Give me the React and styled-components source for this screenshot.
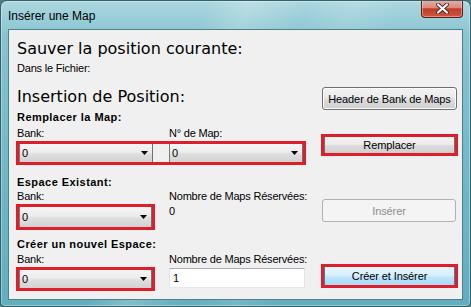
import { createGlobalStyle, styled } from "styled-components";

const GlobalStyle = createGlobalStyle`
  html, body {
    margin: 0;
    padding: 0;
    background: #4f7d83;
  }
  body {
    font-family: "Liberation Sans", Arial, sans-serif;
    color: #000;
  }
`;

const Window = styled.div`
  width: 471px;
  height: 307px;
  box-sizing: border-box;
  display: flex;
  flex-direction: column;
  border: 1px solid #33606a;
  border-radius: 7px 7px 5px 5px;
  padding: 0 7px 6px 7px;
  overflow: hidden;
  box-shadow: inset 0 0 0 1px rgba(255, 255, 255, 0.35);
  background: linear-gradient(
      112deg,
      rgba(255, 255, 255, 0) 35%,
      rgba(255, 255, 255, 0.2) 42%,
      rgba(255, 255, 255, 0) 52%,
      rgba(255, 255, 255, 0.12) 60%,
      rgba(255, 255, 255, 0) 68%
    ),
    linear-gradient(180deg, #acd7df 0%, #86c4d0 12%, #74b9c8 50%, #61aebe 100%);
`;

const TitleBar = styled.div`
  height: 28px;
  display: flex;
  align-items: flex-start;
  justify-content: space-between;
`;

const Title = styled.div`
  margin-top: 8px;
  font-size: 12px;
  line-height: 14px;
  color: #000;
`;

const CloseButton = styled.div`
  width: 42px;
  height: 18px;
  margin-top: -1px;
  box-sizing: border-box;
  border: 1px solid #5a1d17;
  border-top: none;
  border-radius: 0 0 4px 4px;
  background: linear-gradient(180deg, #e8b0a5 0%, #d98a7b 45%, #c23a28 52%, #d05540 100%);
  box-shadow: inset 0 0 0 1px rgba(255, 255, 255, 0.35);
  display: flex;
  align-items: center;
  justify-content: center;
`;

const Client = styled.div`
  flex: 1;
  background: #f0f0f0;
  border: 1px solid #4f7f89;
  padding: 9px 0 0 7px;
`;

const Heading = styled.div`
  grid-column: ${(p) => p.$span || "auto"};
  margin-left: 1px;
  font-family: "DejaVu Sans", "Liberation Sans", sans-serif;
  font-size: 16px;
  line-height: 19px;
`;

const Small = styled.div`
  margin: ${(p) => p.$top || 0}px 0 0 ${(p) => (p.$indent ? 1 : 0)}px;
  font-size: 11px;
  line-height: 13px;
  letter-spacing: -0.2px;
`;

const Bold = styled.div`
  grid-column: 1 / 3;
  margin-left: 1px;
  font-size: 11px;
  line-height: 13px;
  font-weight: bold;
  letter-spacing: 0.45px;
`;

const Section = styled.div`
  display: grid;
  grid-template-columns: 153px 152px 137px;
  align-items: start;
  margin-top: ${(p) => p.$top}px;
`;

const RedBox = styled.div`
  grid-column: ${(p) => p.$span || "1"};
  width: ${(p) => p.$w}px;
  height: ${(p) => p.$h}px;
  margin-top: 1px;
  box-sizing: border-box;
  border: 3px solid #dc1f2b;
  display: flex;
  justify-content: space-between;
  background: #f0f0f0;
`;

const Combo = styled.div`
  width: ${(p) => p.$w}px;
  height: 100%;
  box-sizing: border-box;
  border-left: 1px solid #7a7a7a;
  border-right: 1px solid #707070;
  background: linear-gradient(180deg, #f5f5f5 0%, #ececec 45%, #dfdfdf 55%, #d2d2d2 100%);
  display: flex;
  align-items: center;
  justify-content: space-between;
  padding: 0 4px 0 2px;
  font-size: 11px;
`;

const Button = styled.div`
  grid-column: 3;
  grid-row: 1 / 4;
  margin: ${(p) => p.$top || 0}px 0 0 1px;
  width: ${(p) => p.$w}px;
  height: ${(p) => p.$h}px;
  box-sizing: border-box;
  border: 1px solid ${(p) => (p.$disabled ? "#adb2b5" : "#707070")};
  border-radius: 3px;
  background: ${(p) =>
    p.$disabled
      ? "#f4f4f4"
      : "linear-gradient(180deg, #f2f2f2 0%, #ebebeb 48%, #dddddd 52%, #cfcfcf 100%)"};
  box-shadow: inset 0 0 0 1px ${(p) => (p.$disabled ? "#f4f4f4" : "#fbfbfb")};
  color: ${(p) => (p.$disabled ? "#8d8d8d" : "#000")};
  display: flex;
  align-items: center;
  justify-content: center;
  font-size: 11px;
  letter-spacing: -0.1px;
`;

const RedButton = styled.div`
  grid-column: 3;
  grid-row: 1 / 4;
  margin-top: ${(p) => p.$top}px;
  height: ${(p) => p.$h}px;
  box-sizing: border-box;
  border: 3px solid #dc1f2b;
  display: flex;
`;

const InnerButton = styled.div`
  flex: 1;
  box-sizing: border-box;
  border-left: 1px solid ${(p) => (p.$blue ? "#3c7fb1" : "#707070")};
  border-right: 1px solid ${(p) => (p.$blue ? "#3c7fb1" : "#707070")};
  background: ${(p) =>
    p.$blue
      ? "linear-gradient(180deg, #e6f4fc 0%, #d9f0fc 45%, #bee6fd 55%, #a7d9f5 100%)"
      : "linear-gradient(180deg, #f2f2f2 0%, #ebebeb 48%, #dddddd 52%, #cfcfcf 100%)"};
  display: flex;
  align-items: center;
  justify-content: center;
  font-size: 11px;
  letter-spacing: -0.1px;
`;

const Value = styled.div`
  grid-column: 2;
  margin-top: ${(p) => p.$top}px;
  font-size: 11px;
  line-height: 13px;
`;

const TextBox = styled.div`
  grid-column: 2;
  margin-top: 2px;
  width: 136px;
  height: 20px;
  box-sizing: border-box;
  background: #fff;
  border: 1px solid #e2e3ea;
  border-top-color: #abadb3;
  border-bottom-color: #e3e9ef;
  padding-left: 3px;
  display: flex;
  align-items: center;
  font-size: 11px;
`;

const Arrow = () => (
  <svg width="7" height="4" viewBox="0 0 7 4">
    <polygon points="0,0 7,0 3.5,4" fill="#000" />
  </svg>
);

const CloseX = () => (
  <svg width="13" height="11" viewBox="0 0 13 11">
    <path d="M2 1.5 L11 9.5 M11 1.5 L2 9.5" stroke="#4a2a25" strokeWidth="4" strokeLinecap="round" />
    <path d="M2 1.5 L11 9.5 M11 1.5 L2 9.5" stroke="#fff" strokeWidth="2.2" strokeLinecap="round" />
  </svg>
);

const ComboBox = ({ w }) => (
  <Combo $w={w}>
    <span>0</span>
    <Arrow />
  </Combo>
);

export default function App() {
  return (
    <>
      <GlobalStyle />
      <Window>
        <TitleBar>
          <Title>Insérer une Map</Title>
          <CloseButton>
            <CloseX />
          </CloseButton>
        </TitleBar>
        <Client>
          <Heading>Sauver la position courante:</Heading>
          <Small $top={4} $indent>
            Dans le Fichier:
          </Small>

          <Section $top={12}>
            <Heading $span="1 / 3">Insertion de Position:</Heading>
            <Button $w={135} $h={23}>
              Header de Bank de Maps
            </Button>
          </Section>

          <Section $top={1}>
            <Bold>Remplacer la Map:</Bold>
            <Small $top={3} $indent>
              Bank:
            </Small>
            <Small $top={3}>N° de Map:</Small>
            <RedBox $span="1 / 3" $w={290} $h={24}>
              <ComboBox w={134} />
              <ComboBox w={134} />
            </RedBox>
            <RedButton $top={23} $h={22}>
              <InnerButton>Remplacer</InnerButton>
            </RedButton>
          </Section>

          <Section $top={11}>
            <Bold>Espace Existant:</Bold>
            <Small $top={1} $indent>
              Bank:
            </Small>
            <Small $top={1}>Nombre de Maps Réservées:</Small>
            <RedBox $w={139} $h={26}>
              <ComboBox w={133} />
            </RedBox>
            <Value $top={2}>0</Value>
            <Button $top={23} $w={134} $h={23} $disabled>
              Insérer
            </Button>
          </Section>

          <Section $top={8}>
            <Bold>Créer un nouvel Espace:</Bold>
            <Small $top={2} $indent>
              Bank:
            </Small>
            <Small $top={2}>Nombre de Maps Réservées:</Small>
            <RedBox $w={139} $h={24}>
              <ComboBox w={133} />
            </RedBox>
            <TextBox>1</TextBox>
            <RedButton $top={26} $h={24}>
              <InnerButton $blue>Créer et Insérer</InnerButton>
            </RedButton>
          </Section>
        </Client>
      </Window>
    </>
  );
}
